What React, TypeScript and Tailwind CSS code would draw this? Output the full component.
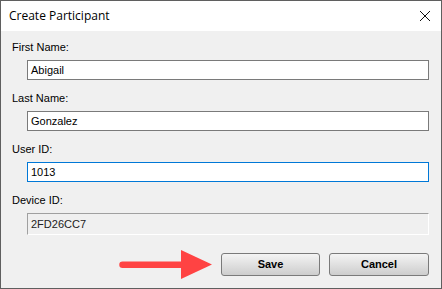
import React from 'react';

const Field = ({ label, value, active }: { label: string; value: string; active?: boolean }) => (
  <div className="flex flex-col">
    <div className="h-[13px] leading-[13px] pl-[11px]">{label}</div>
    <div
      className={`mt-[6px] ml-[26px] w-[402px] h-[20px] bg-white border flex items-center pl-[3px] ${
        active ? 'border-[#0078d7]' : 'border-[#7a7a7a]'
      }`}
    >
      {value}
    </div>
  </div>
);

export default function App() {
  return (
    <div
      className="w-[442px] h-[289px] flex flex-col border border-[#5f5f5f] bg-[#f0f0f0] text-black text-[11px] overflow-hidden"
      style={{ fontFamily: '"Liberation Sans", Arial, sans-serif' }}
    >
      {/* title bar */}
      <div className="h-[30px] bg-white flex items-center justify-between pl-[8px] pr-[9px] shrink-0">
        <span className="text-[12px]" style={{ fontFamily: '"Open Sans", "Liberation Sans", sans-serif' }}>
          Create Participant
        </span>
        <svg width="12" height="12" viewBox="0 0 12 12" className="mr-[1px]">
          <path d="M1 1L11 11M11 1L1 11" stroke="#111" strokeWidth="1" />
        </svg>
      </div>

      <div className="flex flex-col pt-[10px] gap-[12px]">
        <Field label="First Name:" value="Abigail" />
        <Field label="Last Name:" value="Gonzalez" />
        <Field label="User ID:" value="1013" active />
        <div className="flex flex-col">
          <div className="h-[13px] leading-[13px] pl-[11px]">Device ID:</div>
          <div className="mt-[6px] ml-[26px] w-[402px] h-[22px] flex items-center pl-[3px] border border-t-[#a0a0a0] border-l-[#a0a0a0] border-r-white border-b-white text-[#222]">
            2FD26CC7
          </div>
        </div>
      </div>

      <div className="flex items-center mt-[14px] ml-[116px]">
        <svg width="95" height="31" viewBox="0 0 95 31">
          <path d="M5.5 12.5H64V1L95 15.5L64 30V19H5.5A3.25 3.25 0 0 1 5.5 12.5Z" fill="#ff4343" />
        </svg>
        <button className="ml-[9px] w-[99px] h-[23px] rounded-[3px] border border-[#7a7a7a] bg-gradient-to-b from-[#f4f4f4] to-[#cdcdcd] font-bold text-[11px]">
          Save
        </button>
        <button className="ml-[9px] w-[100px] h-[23px] rounded-[3px] border border-[#7a7a7a] bg-gradient-to-b from-[#f4f4f4] to-[#cdcdcd] font-bold text-[11px]">
          Cancel
        </button>
      </div>
    </div>
  );
}
